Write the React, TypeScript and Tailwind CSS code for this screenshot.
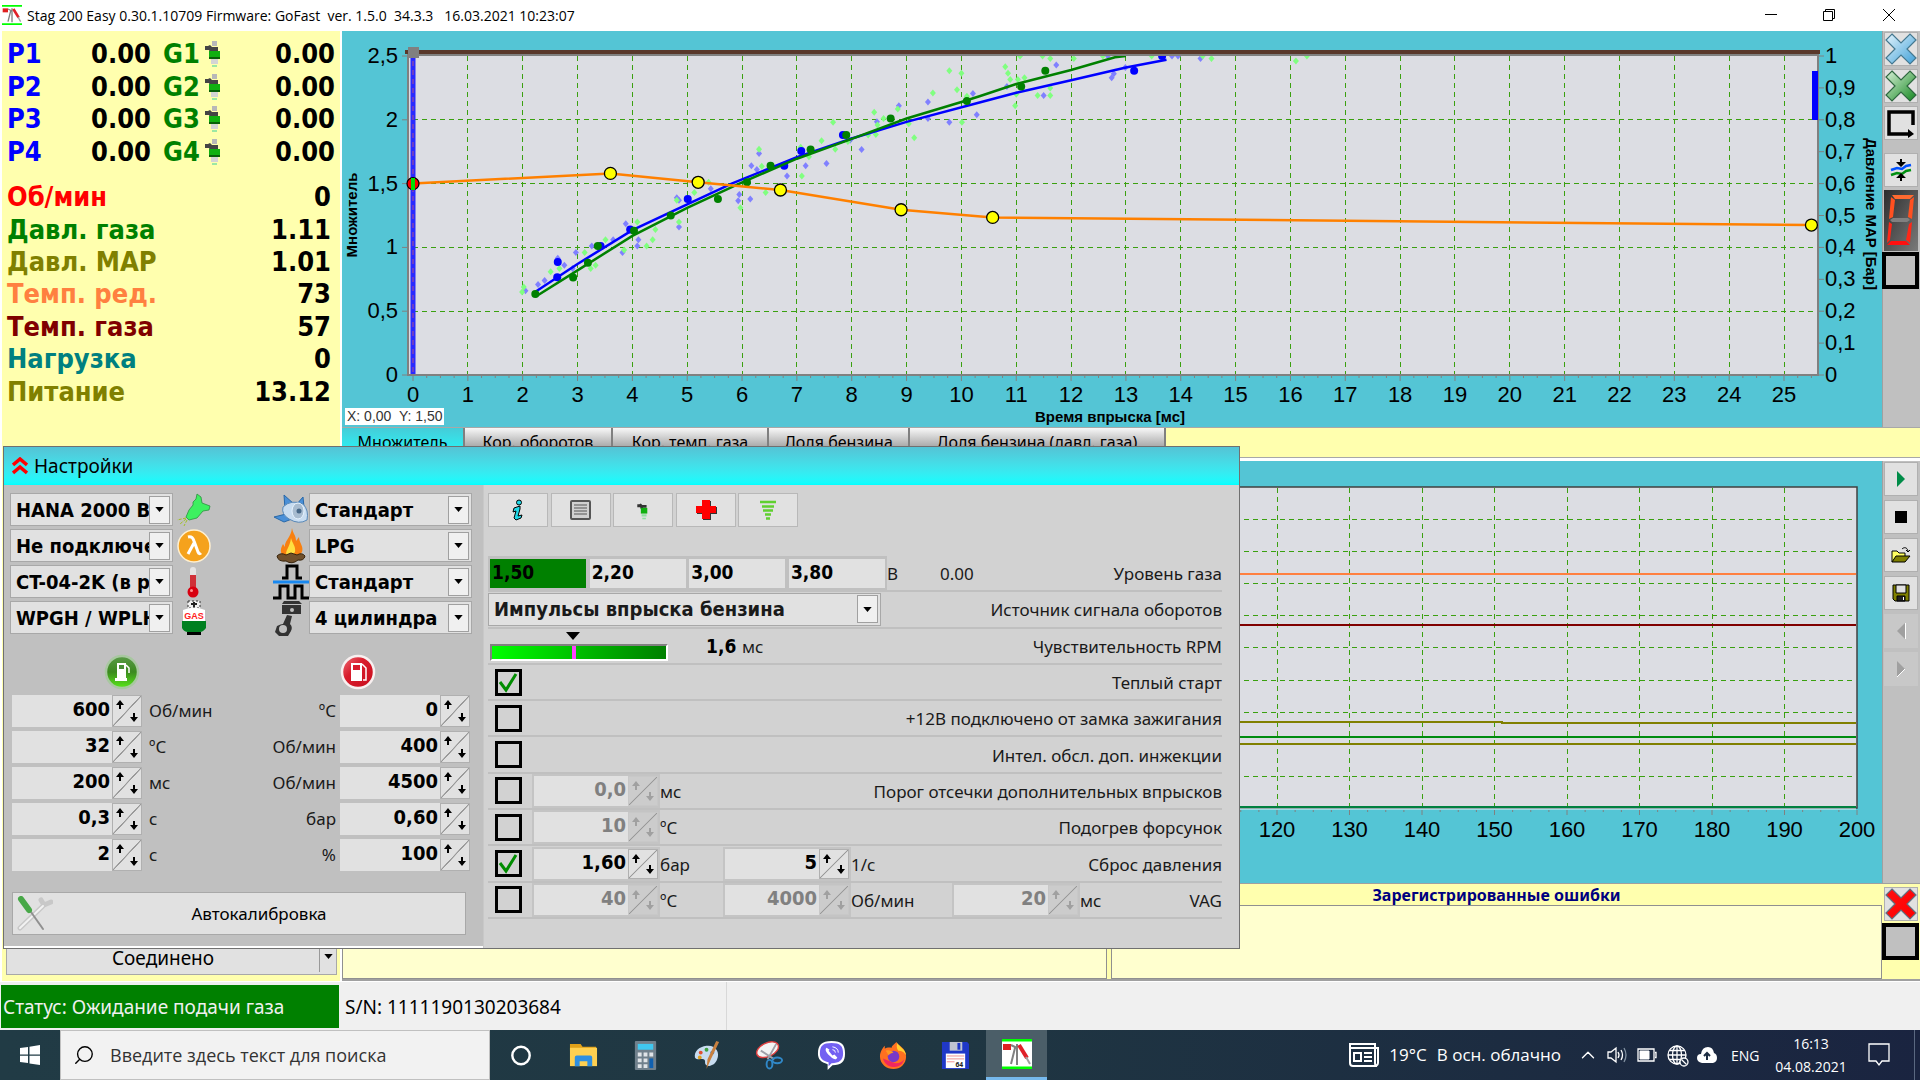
import React, { ReactNode } from 'react';
import { ChevronUp, Search } from 'lucide-react';

type Point = [number, number];

const BOLD = "font-['DejaVu_Sans_Condensed','DejaVu_Sans',sans-serif] font-bold";

const injectors = [1, 2, 3, 4];

const readings = [
  { label: 'Об/мин', value: '0', color: 'text-[#ff0000]' },
  { label: 'Давл. газа', value: '1.11', color: 'text-[#008000]' },
  { label: 'Давл. MAP', value: '1.01', color: 'text-[#808000]' },
  { label: 'Темп. ред.', value: '73', color: 'text-[#ff8040]' },
  { label: 'Темп. газа', value: '57', color: 'text-[#800000]' },
  { label: 'Нагрузка', value: '0', color: 'text-[#008080]' },
  { label: 'Питание', value: '13.12', color: 'text-[#808000]' },
];

const tabs = [
  { label: 'Множитель', width: 'w-[123px]' },
  { label: 'Кор. оборотов', width: 'w-[148px]' },
  { label: 'Кор. темп. газа', width: 'w-[156px]' },
  { label: 'Доля бензина', width: 'w-[141px]' },
  { label: 'Доля бензина (давл. газа)', width: 'w-[256px]' },
];

// chart points are [injection time in ms, multiplier]
const orangeLine: Point[] = [[0, 1.5], [3.6, 1.58], [5.2, 1.51], [6.7, 1.45], [8.9, 1.295], [10.57, 1.235], [25.5, 1.175]];

const blueCurve: Point[] = [
  [2.24, 0.655], [3, 0.87], [4, 1.135], [5, 1.338], [5.81, 1.5], [7, 1.707], [8, 1.853],
  [9, 1.984], [10.33, 2.136], [11, 2.212], [12, 2.31], [13, 2.41], [13.74, 2.47],
];

const greenCurve: Point[] = [
  [2.24, 0.615], [3, 0.82], [4, 1.09], [5, 1.31], [5.9, 1.49], [7, 1.695], [8, 1.85],
  [9, 2.01], [10, 2.14], [10.33, 2.185], [11, 2.28], [12, 2.39], [12.8, 2.49], [13, 2.5],
];

const blueDots: Point[] = [
  [2.64, 0.885], [2.63, 0.767], [3.96, 1.14], [3.42, 1.01], [5.01, 1.38], [6.77, 1.64],
  [7.08, 1.755], [7.84, 1.88], [13.15, 2.385], [13.66, 2.5],
];

const greenDots: Point[] = [
  [2.23, 0.634], [2.92, 0.764], [3.19, 0.88], [3.37, 1.01], [4.03, 1.13], [4.7, 1.25], [5.56, 1.38], [6.09, 1.51],
  [6.52, 1.64], [7.25, 1.767], [7.9, 1.88], [8.71, 2.01], [10.1, 2.147], [11.09, 2.26], [11.53, 2.385],
];

const lightGreen: Point[] = [
  [1.99, 0.65], [2.02, 0.69], [2.51, 0.81], [2.67, 0.835], [3.13, 0.96], [3.51, 1.06], [3.24, 0.835], [3.33, 0.86],
  [3.85, 0.98], [4.09, 1.2], [4.26, 1.01], [4.37, 1.06], [4.42, 1.14], [4.85, 1.2], [4.81, 1.37], [5.13, 1.43],
  [5.39, 1.51], [5.97, 1.31], [6.43, 1.43], [6.36, 1.635], [6.31, 1.77], [7.09, 1.56], [7.22, 1.71], [7.07, 1.785],
  [7.45, 1.835], [7.7, 1.77], [7.66, 1.98], [7.93, 1.83], [8.3, 1.88], [8.44, 1.885], [8.47, 1.96], [8.41, 2.06],
  [8.58, 2.01], [8.84, 2.085], [9.04, 1.97], [9.14, 1.86], [9.48, 2.21], [9.78, 2.385], [9.92, 2.235], [10, 2.365],
  [10.01, 1.98], [10.1, 2.185], [10.8, 2.415], [10.85, 2.365], [10.89, 2.315], [11.03, 2.315], [11.15, 2.33],
  [10.98, 2.11], [11, 2.2], [11.39, 2.19], [11.62, 2.19], [11.62, 2.25], [11.62, 2.48], [12.05, 2.48], [14.56, 2.48],
  [16.1, 2.46], [11.07, 2.5], [11.48, 2.5], [12.58, 2.5], [13.47, 2.5], [14.4, 2.5], [16.3, 2.5],
];

const lightBlue: Point[] = [
  [2.05, 0.66], [2.28, 0.71], [2.4, 0.74], [2.76, 0.86], [2.91, 0.835], [2.97, 0.96], [2.64, 0.915], [3.26, 1.01],
  [3.65, 1.06], [3.82, 0.96], [4.09, 1.01], [4.11, 1.06], [3.88, 1.185], [4.85, 1.16], [4.81, 1.39], [4.85, 1.37],
  [5.43, 1.46], [5.93, 1.365], [5.95, 1.415], [6.15, 1.38], [6.17, 1.64], [6.27, 1.61], [6.31, 1.735], [6.82, 1.56],
  [7.16, 1.64], [7.54, 1.657], [7.97, 1.84], [8.18, 1.767], [8.46, 1.985], [8.86, 2.11], [9.39, 2.14], [9.39, 2.01],
  [9.78, 1.98], [10.21, 2.207], [10.28, 2.04], [10.83, 2.26], [11.5, 2.19], [11.73, 2.43], [12.74, 2.33],
  [12.78, 2.36], [12.99, 2.41], [14.36, 2.48], [12.67, 2.5], [13.84, 2.5], [13.95, 2.5],
];

const sx = (ms: number) => 71 + ms * 54.84;
const sy = (mult: number) => 344 - mult * 127.6;
const toPath = (points: Point[]) => points.map(([x, y]) => `${sx(x)},${sy(y)}`).join(' ');
const range = (n: number) => Array.from({ length: n }, (_, i) => i);

const Diamonds = ({ points, color }: { points: Point[]; color: string }) => (
  <g fill={color}>
    {points.map(([x, y], i) => (
      <path key={i} d={`M${sx(x)} ${sy(y) - 3.5}l3 3.5l-3 3.5l-3-3.5z`} />
    ))}
  </g>
);

const MultiplierChart = () => (
  <svg
    viewBox="0 0 1540 396"
    preserveAspectRatio="none"
    className="block h-[396px] w-full bg-[#54c5d5] font-['Liberation_Sans',Arial,sans-serif]"
    role="img"
    aria-label="Множитель"
  >
    <clipPath id="plot">
      <rect x="66" y="25" width="1410" height="319" />
    </clipPath>
    <rect x="66" y="24" width="1410" height="320" fill="#dcdde3" stroke="#808080" strokeWidth="2" />
    <g stroke="#3aa010" strokeWidth="1" strokeDasharray="5 4" shapeRendering="crispEdges">
      {range(25).map((i) => (
        <line key={i} x1={sx(i + 1)} x2={sx(i + 1)} y1="25" y2="343" />
      ))}
      {[0.5, 1, 1.5, 2].map((v) => (
        <line key={v} x1="71" x2="1475" y1={sy(v)} y2={sy(v)} />
      ))}
    </g>
    <g stroke="#808080">
      {range(103).map((i) => (
        <line key={i} x1={sx(i / 4)} x2={sx(i / 4)} y1="344" y2={i % 4 ? 347 : 350} />
      ))}
      {range(6).map((i) => (
        <line key={i} x1="60" x2="66" y1={sy(i / 2)} y2={sy(i / 2)} />
      ))}
      {range(11).map((i) => (
        <line key={i} x1="1476" x2="1482" y1={sy(i / 4)} y2={sy(i / 4)} />
      ))}
    </g>
    <g fontSize="22" fill="#000">
      {range(26).map((i) => (
        <text key={i} x={sx(i)} y="371" textAnchor="middle">{i}</text>
      ))}
      {['0', '0,5', '1', '1,5', '2', '2,5'].map((t, i) => (
        <text key={t} x="56" y={sy(i / 2) + 7} textAnchor="end">{t}</text>
      ))}
      {['0', '0,1', '0,2', '0,3', '0,4', '0,5', '0,6', '0,7', '0,8', '0,9', '1'].map((t, i) => (
        <text key={t} x="1483" y={sy(i / 4) + 7}>{t}</text>
      ))}
    </g>
    <g fontSize="15" fontWeight="bold" textAnchor="middle">
      <text transform="translate(15 184) rotate(-90)">Множитель</text>
      <text transform="translate(1524 183) rotate(90)">Давление MAP [Бар]</text>
      <text x="768" y="391">Время впрыска [мс]</text>
    </g>
    <line x1="63" x2="1478" y1="21" y2="21" stroke="#59382b" strokeWidth="4" />
    <line x1="71" x2="71" y1="21" y2="343" stroke="#2a2aff" strokeWidth="5" />
    <line x1="71" x2="71" y1="21" y2="343" stroke="#b0508c" strokeDasharray="5 4" />
    <rect x="66" y="16" width="11" height="11" fill="#808080" />
    <g clipPath="url(#plot)">
      <Diamonds points={lightBlue} color="#8080ff" />
      <Diamonds points={lightGreen} color="#80ff80" />
      {blueDots.map(([x, y], i) => (
        <circle key={i} cx={sx(x)} cy={sy(y)} r="4" fill="#0000ff" />
      ))}
      <polyline points={toPath(blueCurve)} fill="none" stroke="#0000ff" strokeWidth="2.5" />
      {greenDots.map(([x, y], i) => (
        <circle key={i} cx={sx(x)} cy={sy(y)} r="4" fill="#008000" />
      ))}
      <polyline points={toPath(greenCurve)} fill="none" stroke="#008000" strokeWidth="2.5" />
      <polyline points={toPath(orangeLine)} fill="none" stroke="#ff8000" strokeWidth="2.5" />
    </g>
    <rect x="1470" y="40" width="6" height="49" fill="#0000ff" />
    {orangeLine.map(([x, y], i) => (
      <circle key={i} cx={sx(x)} cy={sy(y)} r="6" fill={i ? '#ffff00' : '#ff0000'} stroke="#000" strokeWidth="1.3" />
    ))}
    <rect x="69" y="147" width="4" height="12" fill="#00e000" />
  </svg>
);

const ox = (v: number) => 65 + v * 7.25;

const Oscilloscope = () => (
  <svg
    viewBox="0 0 1540 422"
    preserveAspectRatio="none"
    className="block h-[422px] w-full bg-[#54c5d5] font-['Liberation_Sans',Arial,sans-serif]"
    role="img"
    aria-label="Осциллограф"
  >
    <rect x="65" y="26" width="1450" height="321" fill="#dcdde3" stroke="#404040" strokeWidth="1.5" />
    <g stroke="#3aa010" strokeDasharray="5 4" shapeRendering="crispEdges">
      {range(19).map((i) => (
        <line key={i} x1={ox((i + 1) * 10)} x2={ox((i + 1) * 10)} y1="27" y2="346" />
      ))}
      {range(9).map((i) => (
        <line key={i} x1="65" x2="1514" y1={58 + i * 32.2} y2={58 + i * 32.2} />
      ))}
    </g>
    <g fill="none" strokeWidth="2">
      <path d="M65 113H1514" stroke="#ff8040" />
      <path d="M65 164H1514" stroke="#800000" />
      <path d="M65 261H1160V262H1514" stroke="#808000" />
      <path d="M65 276H1514" stroke="#008c10" />
      <path d="M65 283H1514" stroke="#808000" />
      <path d="M65 346H1514" stroke="#008040" />
      <path d="M65 348H1514" stroke="#e8f4f4" strokeWidth="1" />
    </g>
    <g stroke="#808080">
      {range(81).map((i) => (
        <line key={i} x1={ox(i * 2.5)} x2={ox(i * 2.5)} y1="349" y2={i % 4 ? 351 : 354} />
      ))}
    </g>
    <g fontSize="22" textAnchor="middle">
      {[120, 130, 140, 150, 160, 170, 180, 190, 200].map((v) => (
        <text key={v} x={ox(v)} y="376">{v}</text>
      ))}
    </g>
  </svg>
);

const InjectorIcon = () => (
  <svg viewBox="0 0 16 28" className="h-7 w-4">
    <rect x="7" y="1" width="5" height="5" fill="#b8b8b8" />
    <path d="M0 6h3l2-1 2 2h6v4H7l-1 2H5L4 10H0z" fill="#444" />
    <rect x="4" y="11" width="11" height="8" fill="#10b010" />
    <rect x="4" y="17" width="11" height="2" fill="#086008" />
    <path d="M6 19h7v5H6z" fill="#d4d4d4" />
    <path d="M7 25h5v2H7z" fill="#9ce8a4" />
  </svg>
);

const Telemetry = () => (
  <section className="flex w-[342px] shrink-0 flex-col bg-white pl-[2px] pr-[2px]">
    <div className="flex flex-1 flex-col bg-[#ffffae]">
      <div className={`${BOLD} mt-[7px] grid h-[130px] grid-rows-4 items-center pl-[5px] pr-[5px] text-[27px] leading-8`}>
        {injectors.map((n) => (
          <div key={n} className="flex items-center">
            <span className="w-14 text-[#0000ff]">P{n}</span>
            <span className="w-[88px] text-right">0.00</span>
            <span className="w-[54px] pl-3 text-[#008000]">G{n}</span>
            <InjectorIcon />
            <span className="flex-1 text-right">0.00</span>
          </div>
        ))}
      </div>
      <div className={`${BOLD} mt-[13px] grid h-[227px] grid-rows-7 items-center pl-[5px] pr-[9px] text-[27px] leading-8`}>
        {readings.map((r) => (
          <div key={r.label} className="flex justify-between">
            <span className={r.color}>{r.label}</span>
            <span>{r.value}</span>
          </div>
        ))}
      </div>
      <button className="mt-auto mb-1.5 ml-1 mr-[3px] flex h-[34px] items-center border border-[#a8a8a8] bg-[#e1e1e1] text-[19px]">
        <span className="flex-1 text-center">Соединено</span>
        <span className="flex h-7 w-[17px] items-center justify-center border-l border-[#999] pb-1">
          <DownArrow />
        </span>
      </button>
    </div>
  </section>
);

const DownArrow = () => (
  <svg viewBox="0 0 10 6" className="h-[5px] w-[9px] shrink-0">
    <path d="M0 0h10L5 6z" fill="#000" />
  </svg>
);

const ToolButton = ({ label, children, disabled }: { label: string; children: ReactNode; disabled?: boolean }) => (
  <button
    aria-label={label}
    disabled={disabled}
    className="flex h-[34px] w-[34px] shrink-0 items-center justify-center border border-[#b0b0b0] bg-[#e1e1e1] disabled:border-[#c8c8c8] disabled:bg-[#c8c8c8]"
  >
    {children}
  </button>
);

const BigCross = ({ id, from, to, stroke }: { id: string; from: string; to: string; stroke: string }) => (
  <svg viewBox="0 0 32 32" className="size-8 shrink-0">
    <linearGradient id={id} x1="0" y1="0" x2="1" y2="1">
      <stop offset="0" stopColor={from} />
      <stop offset="1" stopColor={to} />
    </linearGradient>
    <path d="M7 1l9 9 9-9 6 6-9 9 9 9-6 6-9-9-9 9-6-6 9-9-9-9z" fill={`url(#${id})`} stroke={stroke} strokeWidth="1.2" />
  </svg>
);

const ThickCheck = ({ label }: { label: string }) => (
  <input
    type="checkbox"
    aria-label={label}
    className="h-[37px] w-[37px] shrink-0 appearance-none border-4 border-black bg-[#c0c0c0]"
  />
);

const ChartTools = () => (
  <aside className="flex w-[38px] shrink-0 flex-col items-center border-l border-[#a0a0a0] bg-[#c0c0c0] pt-px pr-[2px]">
    <div className="flex flex-col gap-[3px]">
      <ToolButton label="Очистить бензин">
        <BigCross id="xb" from="#e4f4fc" to="#3fa0d8" stroke="#447890" />
      </ToolButton>
      <ToolButton label="Очистить газ">
        <BigCross id="xg" from="#d8f0d8" to="#148820" stroke="#2f6840" />
      </ToolButton>
      <ToolButton label="Обход">
        <svg viewBox="0 0 30 30" className="size-[30px]" fill="none" stroke="#000" strokeWidth="3.5">
          <path d="M27 17V4H3v22h20" />
          <path d="M22 21l6 5-6 4z" fill="#000" stroke="none" />
        </svg>
      </ToolButton>
    </div>
    <div className="mt-[13px] flex flex-col gap-[3px]">
      <ToolButton label="Совместить">
        <svg viewBox="0 0 24 24" className="size-6" fill="none">
          <path d="M2 12l6-2 5 1 4-3 5-1" stroke="#0050ff" strokeWidth="2.5" />
          <path d="M2 17l6-2 5 1 4-3 5-1" stroke="#009010" strokeWidth="2.5" />
          <path d="M12 1v7M12 23v-7" stroke="#000" strokeWidth="2" />
          <path d="M7 4h10l-5 5zM7 20h10l-5-5z" fill="#000" />
        </svg>
      </ToolButton>
      <svg viewBox="0 0 34 61" className="h-[61px] w-[34px]">
        <linearGradient id="led" x1="0" y1="0" x2="1" y2="1">
          <stop offset="0" stopColor="#2c2c2c" />
          <stop offset="1" stopColor="#7a7a7a" />
        </linearGradient>
        <rect width="34" height="61" fill="url(#led)" />
        <path d="M8 5h22l-4 4H11z" fill="#ff6a30" />
        <path d="M7 7l4 3-2 17-4 2zM30 7l-4 3-2 17 4 2z" fill="#ff5020" />
        <path d="M6 30l3-2h15l2 2-3 2H8z" fill="#808080" />
        <path d="M5 32l3 2-2 16-3 3zM28 32l-3 2-3 16 4 3z" fill="#ff2818" />
        <path d="M3 55l4-4h15l4 4z" fill="#ff1010" />
      </svg>
    </div>
    <div className="mt-px w-[37px]">
      <ThickCheck label="Индикация" />
    </div>
  </aside>
);

const LogTools = () => (
  <aside className="flex w-[38px] shrink-0 flex-col items-center gap-1 border-l border-[#a0a0a0] bg-[#c0c0c0] pt-px pr-[2px]">
    <ToolButton label="Старт">
      <svg viewBox="0 0 10 16" className="h-4 w-2.5"><path d="M1 0l8 8-8 8z" fill="#008c48" /></svg>
    </ToolButton>
    <ToolButton label="Стоп">
      <svg viewBox="0 0 12 12" className="size-3"><path d="M0 0h12v12H0z" /></svg>
    </ToolButton>
    <ToolButton label="Открыть">
      <svg viewBox="0 0 20 18" className="h-[18px] w-5" stroke="#000">
        <path d="M1 16V5h5l2 2h6v3" fill="#ffff60" />
        <path d="M1 16l4-6h14l-5 6z" fill="#808000" />
        <path d="M11 3c2-2 5-2 6 2m-2-1l2 2 2-2" fill="none" />
      </svg>
    </ToolButton>
    <ToolButton label="Сохранить">
      <svg viewBox="0 0 18 18" className="size-[18px]" stroke="#000">
        <path d="M1 1h16v16H3l-2-2z" fill="#808000" />
        <path d="M4 1h10v8H4z" fill="#e1e1e1" />
        <path d="M5 12h8v5H5z" fill="#222" />
        <path d="M11 13h1v3h-1z" fill="#fff" stroke="none" />
      </svg>
    </ToolButton>
    <ToolButton label="Назад" disabled>
      <svg viewBox="0 0 10 16" className="h-4 w-2.5"><path d="M9 0L1 8l8 8z" fill="#a0a0a0" /><path d="M9.500 0v16" stroke="#fff" /></svg>
    </ToolButton>
    <ToolButton label="Вперёд" disabled>
      <svg viewBox="0 0 10 16" className="h-4 w-2.5"><path d="M1 0l8 8-8 8z" fill="#a0a0a0" /><path d="M9 8l-8 8" stroke="#fff" /></svg>
    </ToolButton>
  </aside>
);

const Combo = ({ label, value, className }: { label: string; value: string; className: string }) => (
  <div className={`flex h-[33px] shrink-0 items-center border border-[#a8a8a8] bg-[#e1e1e1] pr-0.5 ${className}`}>
    <select aria-label={label} className={`${BOLD} h-full min-w-0 flex-1 appearance-none overflow-hidden pl-[5px] text-[20px]`}>
      <option>{value}</option>
    </select>
    <span className="flex h-[28px] w-[21px] items-center justify-center border border-[#a0a0a0] bg-[#f0f0f0]">
      <DownArrow />
    </span>
  </div>
);

const Arrow = ({ down }: { down?: boolean }) => (
  <svg viewBox="0 0 8 9" className="h-[9px] w-2">
    <path d={down ? 'M3 0h2v4h3L4 9 0 4h3z' : 'M3 9h2V5h3L4 0 0 5h3z'} fill="currentColor" />
  </svg>
);

interface SpinnerProps {
  label: string;
  value: string;
  className: string;
  disabled?: boolean;
}

const Spinner = ({ label, value, className, disabled }: SpinnerProps) => (
  <div className={`flex shrink-0 ${className} ${disabled ? 'text-[#808080]' : 'text-black'}`}>
    <input
      aria-label={label}
      defaultValue={value}
      disabled={disabled}
      className={`${BOLD} min-w-0 flex-1 bg-[#e1e1e1] pr-0.5 pb-1 text-right text-[20px]`}
    />
    <div
      className={`grid w-[30px] grid-cols-2 border bg-[linear-gradient(to_bottom_right,transparent_48%,#999_49%,#999_51%,transparent_52%)] ${
        disabled ? 'border-[#c8c8c8] bg-[#cccccc] text-[#a0a0a0]' : 'border-[#b0b0b0] bg-[#e1e1e1]'
      }`}
    >
      <button aria-label={`${label} +`} disabled={disabled} className="flex items-start justify-center pt-1">
        <Arrow />
      </button>
      <button aria-label={`${label} -`} disabled={disabled} className="flex items-end justify-center pb-1">
        <Arrow down />
      </button>
    </div>
  </div>
);

const GasInjector = () => (
  <svg viewBox="0 0 34 34" className="size-[34px]">
    <path d="M20 1l4 3 1 6 8 3-1 4-6 1-6 7-8 2-3-3 3-7 4-5 0-3 3-3z" fill="#3df060" stroke="#2d9040" strokeWidth=".8" />
    <path d="M9 25l-9 2M9 26l-6 5M10 27l-3 6" stroke="#a0c020" strokeDasharray="3 1.5" />
  </svg>
);

const Lambda = () => (
  <svg viewBox="0 0 34 34" className="size-[34px]">
    <circle cx="17" cy="17" r="16" fill="#f5a21c" stroke="#fff0d0" strokeWidth="1.5" />
    <path d="M11 8c4-1 5 1 6 4l4 11c1 2 2 2 3 1M17 14l-6 11" fill="none" stroke="#fff" strokeWidth="3" />
  </svg>
);

const Thermometer = () => (
  <svg viewBox="0 0 34 34" className="size-[34px]">
    <rect x="13" y="2" width="6" height="24" rx="3" fill="#e4e4e4" />
    <rect x="13" y="10" width="6" height="16" fill="#d03038" />
    <circle cx="16" cy="27" r="5.5" fill="#d80010" />
    <circle cx="14.5" cy="25.5" r="1.5" fill="#ff9090" />
  </svg>
);

const GasTank = () => (
  <svg viewBox="0 0 34 36" className="h-9 w-[34px]">
    <path d="M11 1h12v7H11z" fill="#f0f0f0" stroke="#333" strokeDasharray="2 2" />
    <path d="M14 4h6M17 2v7" stroke="#222" strokeWidth="2" />
    <path d="M6 10q11-5 22 0v12H6z" fill="#fff" />
    <path d="M5 21h24v7q-3 4-6 4H11q-4 0-6-4z" fill="#008020" />
    <path d="M10 32h14v3H10z" />
    <text x="17" y="19" fontSize="9" fontWeight="bold" fill="#ff2020" textAnchor="middle" className="font-['Liberation_Sans',sans-serif]">GAS</text>
  </svg>
);

const Turbo = () => (
  <svg viewBox="0 0 36 34" className="h-[34px] w-9">
    <path d="M11 2l10 9-9 5zM30 4l1 10-8-2zM1 24l12-3 6 5-8 3z" fill="#4a90d8" stroke="#2868a8" />
    <path d="M10 14q8-8 20-3 6 6 4 16-8 5-18-1-8-5-6-12z" fill="#c8dcf0" stroke="#5888b8" />
    <ellipse cx="25" cy="18" rx="6" ry="8" fill="#a8bcd0" stroke="#e8f4ff" />
    <circle cx="26" cy="18" r="2.5" fill="#486888" />
  </svg>
);

const Fire = () => (
  <svg viewBox="0 0 36 36" className="h-9 w-9">
    <path d="M19 0c1 6 4 7 4 13l3-4c0 6 5 9 3 15l-4 5H11c-5-5-3-9-1-13l2 3c-1-6 6-9 7-19z" fill="#f88010" />
    <path d="M18 10c1 5 5 8 4 14l-3 4h-5c-3-5 3-8 4-18z" fill="#ffe040" />
    <path d="M4 28q4-4 9-1l5-2 6 2q5-3 8 1-1 5-7 4-6 5-12 1-8 1-9-5z" fill="#70502c" stroke="#38240c" />
  </svg>
);

const Pulses = () => (
  <svg viewBox="0 0 36 36" className="h-9 w-9" fill="none" stroke="#000" strokeWidth="3">
    <path d="M9 14h5V2h10v12h5" />
    <path d="M0 34h7V22h8v12h7V22h7v12h7" />
    <path d="M0 18h36" stroke="#1888f0" />
  </svg>
);

const Piston = () => (
  <svg viewBox="0 0 36 36" className="h-9 w-9" fill="#333">
    <path d="M11 1h15l3 3H9zM9 5h19v9H9z" />
    <circle cx="19" cy="10" r="2" fill="#c0c0c0" />
    <path d="M14 15l5 1-2 8q3 3 1 7l-3 5H6l-4-4 2-6q4-2 6-2z" />
    <circle cx="10" cy="29" r="4" fill="#c0c0c0" />
  </svg>
);

const GasBadge = () => (
  <svg viewBox="0 0 36 36" className="size-9">
    <linearGradient id="gasBadge" x1="0" y1="0" x2="0" y2="1">
      <stop offset="0" stopColor="#5a9a48" />
      <stop offset=".5" stopColor="#3c8a20" />
      <stop offset="1" stopColor="#58e818" />
    </linearGradient>
    <circle cx="18" cy="18" r="16" fill="url(#gasBadge)" stroke="#a8c8a0" strokeWidth="2.5" />
    <path d="M13 9h9v15h1v3H11v-3h2z" fill="#fff" />
    <path d="M15 11h5v4h-5z" fill="#4a9038" />
    <path d="M22 11l3 3v5" fill="none" stroke="#fff" strokeWidth="1.5" />
  </svg>
);

const PetrolBadge = () => (
  <svg viewBox="0 0 36 36" className="size-9">
    <linearGradient id="petrolBadge" x1="0" y1="0" x2="1" y2="1">
      <stop offset="0" stopColor="#f07078" />
      <stop offset=".4" stopColor="#d81c2c" />
      <stop offset="1" stopColor="#c80c1c" />
    </linearGradient>
    <circle cx="18" cy="18" r="16" fill="url(#petrolBadge)" stroke="#f8f0f0" strokeWidth="2.5" />
    <path d="M11 9h11v18H11z" fill="#fff" />
    <path d="M13 11h7v5h-7z" fill="#d81c2c" />
    <path d="M22 10l4 4v12h-3" fill="none" stroke="#fff" strokeWidth="1.5" />
  </svg>
);

const combos = [
  { left: 'HANA 2000 Blue', leftLabel: 'Форсунки', leftIcon: <GasInjector />, right: 'Стандарт', rightLabel: 'Турбо', rightIcon: <Turbo /> },
  { left: 'Не подключен', leftLabel: 'Лямбда', leftIcon: <Lambda />, right: 'LPG', rightLabel: 'Тип газа', rightIcon: <Fire /> },
  { left: 'CT-04-2K (в редукторе)', leftLabel: 'Датчик температуры', leftIcon: <Thermometer />, right: 'Стандарт', rightLabel: 'Зажигание', rightIcon: <Pulses /> },
  { left: 'WPGH / WPLH', leftLabel: 'Датчик уровня', leftIcon: <GasTank />, right: '4 цилиндра', rightLabel: 'Цилиндры', rightIcon: <Piston /> },
];

const thresholds = [
  { left: '600', leftUnit: 'Об/мин', rightUnit: 'ºC', right: '0' },
  { left: '32', leftUnit: 'ºC', rightUnit: 'Об/мин', right: '400' },
  { left: '200', leftUnit: 'мс', rightUnit: 'Об/мин', right: '4500' },
  { left: '0,3', leftUnit: 'с', rightUnit: 'бар', right: '0,60' },
  { left: '2', leftUnit: 'с', rightUnit: '%', right: '100' },
];

const Row = ({ label, id, children }: { label: string; id?: string; children?: ReactNode }) => (
  <div className="flex items-center border-b-2 border-[#c0c0c0]">
    {children}
    <label htmlFor={id} className="ml-auto whitespace-nowrap pt-0.5">{label}</label>
  </div>
);

const Check = ({ id, checked }: { id: string; checked?: boolean }) => (
  <span className="relative ml-[7px] mr-2.5 size-[27px] shrink-0">
    <input id={id} type="checkbox" defaultChecked={checked} className="peer block size-full appearance-none border-[3px] border-black bg-[#d2d2d2]" />
    <svg viewBox="0 0 27 27" className="pointer-events-none absolute inset-0 hidden peer-checked:block">
      <path d="M5 13l6 8L21 5" fill="none" stroke="#008c00" strokeWidth="3" />
    </svg>
  </span>
);

const Field = ({ label, value, unit, disabled, wide }: { label: string; value: string; unit: string; disabled?: boolean; wide?: string }) => (
  <>
    <div className="flex h-[34px] shrink-0 items-center border-2 border-[#c4c4c4] bg-[#c4c4c4]">
      <Spinner label={label} value={value} disabled={disabled} className="h-[30px] w-[124px]" />
    </div>
    <span className={`pt-0.5 ${wide ?? ''}`}>{unit}</span>
  </>
);

const SettingsDialog = () => (
  <div
    role="dialog"
    aria-label="Настройки"
    className="absolute left-[3px] top-[415px] flex h-[503px] w-[1237px] flex-col border border-[#707070] bg-[#c0c0c0] text-[17px] leading-6 text-[#1a1a1a]"
  >
    <header className="flex h-[38px] shrink-0 items-center bg-linear-to-b from-[#54c3d5] to-[#00ffff] pl-2 text-[19px] text-black">
      <svg viewBox="0 0 16 18" className="mr-1.5 h-[18px] w-4" fill="none" stroke="#ff0000" strokeWidth="3.5">
        <path d="M1 8l7-6 7 6M1 16l7-6 7 6" />
      </svg>
      <h2>Настройки</h2>
    </header>
    <div className="flex flex-1">
      <section className="w-[479px] shrink-0 border-b-2 border-white pl-1.5 pt-2">
        <div className="flex flex-col gap-[3px] pr-[11px] text-black">
          {combos.map((c) => (
            <div key={c.leftLabel} className="flex h-[33px] items-center">
              <Combo label={c.leftLabel} value={c.left} className="mr-1 w-[163px]" />
              {c.leftIcon}
              <span className="flex-1" />
              {c.rightIcon}
              <Combo label={c.rightLabel} value={c.right} className="w-[163px]" />
            </div>
          ))}
        </div>
        <div className="mt-5 flex justify-between pl-[94px] pr-[107px]">
          <GasBadge />
          <PetrolBadge />
        </div>
        <div className="mt-[5px] flex flex-col gap-1 pl-0.5 pr-[13px]">
          {thresholds.map((t, i) => (
            <div key={i} className="flex h-8 items-center">
              <Spinner label={`Порог ${i + 1}`} value={t.left} className="h-8 w-[130px]" />
              <span className="ml-[7px]">{t.leftUnit}</span>
              <span className="ml-auto mr-1">{t.rightUnit}</span>
              <Spinner label={`Порог возврата ${i + 1}`} value={t.right} className="h-8 w-[130px]" />
            </div>
          ))}
        </div>
        <button className="ml-0.5 mt-[21px] flex h-[43px] w-[454px] items-center border border-[#a8a8a8] bg-[#e1e1e1] pl-1 text-black">
          <svg viewBox="0 0 36 36" className="size-9" strokeLinecap="round">
            <path d="M3 32L27 9M27 9l-3-5M27 9l7-3" stroke="#c8c8c8" strokeWidth="5" />
            <path d="M3 32L26 10" stroke="#f2f2f2" strokeWidth="2" />
            <path d="M14 16l12 17" stroke="#909090" strokeWidth="2" />
            <path d="M4 3l8 11" stroke="#48a848" strokeWidth="6" />
          </svg>
          <span className="flex-1 text-center">Автокалибровка</span>
        </button>
      </section>
      <section className="flex-1 border-l border-[#c8c8c8] bg-[#d2d2d2] pl-1 pr-[17px] pt-2">
        <div className="flex w-[310px] justify-between">
          {settingsTools.map((t) => (
            <button key={t.label} aria-label={t.label} className="flex h-[34px] w-[60px] items-center justify-center border border-[#b8b8b8] bg-[#e1e1e1]">
              {t.icon}
            </button>
          ))}
        </div>
        <div className="mt-[29px] grid h-[363px] grid-rows-10">
          <Row label="Уровень газа">
            <div className={`${BOLD} flex h-[34px] w-[399px] items-center justify-between border-x-2 border-[#c0c0c0] bg-[#c0c0c0] text-[19px] text-black`}>
              {['1,50', '2,20', '3,00', '3,80'].map((v, i) => (
                <input
                  key={v}
                  aria-label={`Уровень ${i + 1}`}
                  defaultValue={v}
                  className={`h-[29px] w-24 pb-0.5 pl-0.5 ${i ? 'bg-[#e1e1e1]' : 'bg-[#008000]'}`}
                />
              ))}
            </div>
            <span className="w-[53px] pt-0.5">В</span>
            <span className="pt-0.5">0.00</span>
          </Row>
          <Row label="Источник сигнала оборотов">
            <Combo label="Источник сигнала" value="Импульсы впрыска бензина" className="w-[393px]" />
          </Row>
          <Row label="Чувствительность RPM">
            <div className="ml-0.5 w-[178px]">
              <svg viewBox="0 0 178 10" className="block h-2.5 w-full"><path d="M76 1h14l-7 8z" /></svg>
              <input
                type="range"
                aria-label="Чувствительность"
                defaultValue={47}
                className="mt-[3px] block h-[17px] w-full appearance-none border-2 border-[#808080] border-b-white border-r-white bg-linear-to-r from-[#00ff00] to-[#008000] [&::-webkit-slider-thumb]:h-[13px] [&::-webkit-slider-thumb]:w-[4px] [&::-webkit-slider-thumb]:appearance-none [&::-webkit-slider-thumb]:bg-[#ff40ff]"
              />
            </div>
            <span className={`${BOLD} ml-[38px] w-9 text-[19px] text-black`}>1,6</span>
            <span className="pt-0.5">мс</span>
          </Row>
          <Row label="Теплый старт" id="warm"><Check id="warm" checked /></Row>
          <Row label="+12В подключено от замка зажигания" id="ign"><Check id="ign" /></Row>
          <Row label="Интел. обсл. доп. инжекции" id="inj"><Check id="inj" /></Row>
          <Row label="Порог отсечки дополнительных впрысков" id="cut">
            <Check id="cut" />
            <Field label="Порог отсечки" value="0,0" unit="мс" disabled />
          </Row>
          <Row label="Подогрев форсунок" id="heat">
            <Check id="heat" />
            <Field label="Температура подогрева" value="10" unit="ºC" disabled />
          </Row>
          <Row label="Сброс давления" id="press">
            <Check id="press" checked />
            <Field label="Давление" value="1,60" unit="бар" wide="w-[63px]" />
            <Field label="Скорость сброса" value="5" unit="1/с" />
          </Row>
          <Row label="VAG" id="vag">
            <Check id="vag" />
            <Field label="VAG температура" value="40" unit="ºC" wide="w-[63px]" disabled />
            <Field label="VAG обороты" value="4000" unit="Об/мин" wide="w-[101px]" disabled />
            <Field label="VAG время" value="20" unit="мс" disabled />
          </Row>
        </div>
      </section>
    </div>
  </div>
);

const settingsTools = [
  {
    label: 'Информация',
    icon: (
      <svg viewBox="0 0 12 22" className="h-[22px] w-3" fill="#20d8e8" stroke="#000">
        <circle cx="7" cy="3.5" r="2.5" />
        <path d="M2 9l6-2v3l-2 7 4-1-1 3-5 2-2-2 2-7-3 1z" />
      </svg>
    ),
  },
  {
    label: 'Отчёт',
    icon: (
      <svg viewBox="0 0 22 20" className="h-5 w-[22px]">
        <rect x="1" y="1" width="19" height="18" rx="1" fill="#d0d0d0" stroke="#555" strokeWidth="2" />
        <path d="M4 5h13M4 8h13M4 11h13M4 14h13" stroke="#555" />
      </svg>
    ),
  },
  {
    label: 'Форсунка',
    icon: (
      <svg viewBox="0 0 16 28" className="h-5 w-3">
        <path d="M0 6h3l2-1 2 2h6v4H8l-1 2H5L4 10H0z" fill="#333" />
        <rect x="5" y="11" width="9" height="8" fill="#10b010" />
        <path d="M6 20h7v3H6zM7 25h5v2H7z" fill="#8fe0a0" />
      </svg>
    ),
  },
  {
    label: 'Диагностика',
    icon: (
      <svg viewBox="0 0 22 22" className="size-[22px]">
        <path d="M8 2h8v6h6v7h-6v6H8v-6H2V8h6z" fill="#333" />
        <path d="M7 1h8v6h6v7h-6v6H7v-6H1V7h6z" fill="#ff0000" />
      </svg>
    ),
  },
  {
    label: 'Фильтр',
    icon: (
      <svg viewBox="0 0 18 20" className="h-5 w-[18px]" stroke="#60d030" strokeWidth="2.5">
        <path d="M1 2h16M3 6.500h12M4 10.500h10M6 14.500h6M7 18.500h4" />
      </svg>
    ),
  },
];

const StagLogo = ({ className }: { className: string }) => (
  <svg viewBox="0 0 30 30" className={className}>
    <rect width="30" height="30" fill="#fff" />
    <path d="M0 0h30v2.500H0zM0 27.500h30V30H0z" fill="#00ff00" />
    <path d="M1 5h8v6H1z" fill="#e02020" />
    <path d="M9 6l6 3M13 9l-4 16M15 5v21" stroke="#808080" strokeWidth="2" fill="none" />
    <path d="M17 6l8 13" stroke="#e02028" strokeWidth="4" />
    <path d="M24 18l4 7" stroke="#a0a0a0" strokeWidth="2" />
  </svg>
);

const TitleBar = () => (
  <header className="flex h-[31px] shrink-0 items-center bg-white pb-px">
    <StagLogo className="ml-0.5 mr-[5px] size-5" />
    <h1 className="whitespace-pre font-['Open_Sans','Noto_Sans',sans-serif] text-[14px]">
      {'Stag 200 Easy 0.30.1.10709 Firmware: GoFast  ver. 1.5.0  34.3.3   16.03.2021 10:23:07'}
    </h1>
    <div className="ml-auto flex pr-px">
      <button aria-label="Свернуть" className="flex h-7 w-[58px] items-center justify-center">
        <svg viewBox="0 0 12 12" className="size-3" stroke="#000"><path d="M0 5.500h12" /></svg>
      </button>
      <button aria-label="Восстановить" className="flex h-7 w-[58px] items-center justify-center">
        <svg viewBox="0 0 12 12" className="size-3" fill="none" stroke="#000"><path d="M.5 2.500h9v9h-9zM2.500 2.500v-2h9v9h-2" /></svg>
      </button>
      <button aria-label="Закрыть" className="flex h-7 w-[61px] items-center justify-center">
        <svg viewBox="0 0 12 12" className="size-3" stroke="#000"><path d="M0 0l12 12M12 0L0 12" /></svg>
      </button>
    </div>
  </header>
);

const taskIcons: { label: string; icon: ReactNode }[] = [
  { label: 'Кортана', icon: <circle cx="14.5" cy="15" r="9" fill="none" stroke="#fff" strokeWidth="2.5" /> },
  {
    label: 'Проводник',
    icon: (
      <>
        <path d="M1 3h11l2 3h14v4H1z" fill="#e0a018" />
        <path d="M1 7h28v19H1z" fill="#ffd050" />
        <path d="M6 26v-9q0-2 2-2h14q2 0 2 2v9h-5v-5h-8v5z" fill="#2f8fe0" />
      </>
    ),
  },
  {
    label: 'Калькулятор',
    icon: (
      <>
        <rect x="4" y="0" width="22" height="30" rx="1" fill="#70808c" />
        <rect x="7" y="3" width="16" height="6" fill="#40c8f0" />
        <path d="M7 12h4v4H7zM13 12h4v4h-4zM19 12h4v4h-4zM7 18h4v4H7zM13 18h4v4h-4zM7 24h4v4H7zM13 24h4v4h-4z" fill="#e0e4e8" />
        <path d="M19 18h4v10h-4z" fill="#1060b0" />
      </>
    ),
  },
  {
    label: 'Paint',
    icon: (
      <>
        <path d="M14 5c10-1 14 7 11 14-2 6-8 8-11 6-3-1 0-5-3-6s-7 1-9-2C1 11 6 6 14 5z" fill="#c8dcf0" />
        <circle cx="8" cy="12" r="2" fill="#e05030" />
        <circle cx="14" cy="9" r="2" fill="#40a040" />
        <circle cx="7" cy="17" r="2" fill="#e0a020" />
        <circle cx="20" cy="12" r="2" fill="#3070d0" />
        <path d="M27 1l-9 19-4 9 1-10L24 0z" fill="#c88040" />
      </>
    ),
  },
  {
    label: 'Ножницы',
    icon: (
      <>
        <ellipse cx="13" cy="9" rx="12" ry="7" fill="#f4f4f4" stroke="#e04040" strokeWidth="1.5" transform="rotate(-25 13 9)" />
        <path d="M6 10l14 9M22 3l-9 16" stroke="#a0a0a8" strokeWidth="2" />
        <ellipse cx="15" cy="24" rx="3" ry="4.5" fill="none" stroke="#3088c8" strokeWidth="2" />
        <ellipse cx="23" cy="20" rx="5" ry="3" fill="none" stroke="#3088c8" strokeWidth="2" />
      </>
    ),
  },
  {
    label: 'Viber',
    icon: (
      <>
        <path d="M15 0c11 0 14 4 14 13s-4 12-13 12l-5 5v-6C4 22 1 19 1 13 1 4 5 0 15 0z" fill="#fff" />
        <path d="M15 2c9 0 12 3 12 11 0 7-4 10-12 10l-3 3v-4c-6-1-9-4-9-9C3 5 6 2 15 2z" fill="#7360f2" />
        <path d="M10 7c-3 2 1 7 4 9 3 3 6 4 7 1l-3-3-2 1-4-5 1-1z" fill="#fff" />
        <path d="M16 6q6 1 6 6M16 9q3 0 3 3" fill="none" stroke="#fff" />
      </>
    ),
  },
  {
    label: 'Firefox',
    icon: (
      <>
        <path d="M18 1c2 4 10 6 10 15 0 8-6 13-13 13S1 24 1 16c0-5 3-9 5-11v3c3-2 6-1 7-1 0-2 3-4 5-6z" fill="#ff7020" />
        <path d="M19 2c1 3 9 7 9 13-2-4-5-5-8-5-2-2-2-6-1-8z" fill="#ffd030" />
        <path d="M4 18c2 7 8 9 12 9 6 0 9-4 10-8-3 4-8 5-12 3z" fill="#f02860" />
        <circle cx="15" cy="16" r="6" fill="#7838c8" />
        <path d="M7 10c3-1 6 0 8 2-2 1-4 1-5 3z" fill="#ff9820" />
      </>
    ),
  },
  {
    label: 'Total Commander',
    icon: (
      <>
        <path d="M1 1h26l2 2v26H1z" fill="#2038c8" />
        <path d="M9 1h13v9H9z" fill="#c0c4d0" />
        <path d="M17 2h3v7h-3z" fill="#2038c8" />
        <path d="M5 13h20v15H5z" fill="#fff" />
        <path d="M6 15.500h18M6 18.500h18M6 21.500h8" stroke="#f09090" />
        <text x="15" y="27" fontSize="7" fontWeight="bold" fill="#222">64</text>
      </>
    ),
  },
];

const Taskbar = () => (
  <footer className="flex h-[50px] shrink-0 items-stretch bg-linear-to-r from-[#213b45] via-[#1f3642] to-[#1a2440] font-['Open_Sans','Noto_Sans',sans-serif] text-white">
    <button aria-label="Пуск" className="flex w-[60px] items-center justify-center">
      <svg viewBox="0 0 20 20" className="size-5" fill="#fff">
        <path d="M0 3l8-1v7.500H0zM9.500 1.800L20 0v9.500H9.500zM0 10.800h8V18l-8-1zM9.500 10.800H20V20L9.500 18.400z" />
      </svg>
    </button>
    <label className="flex w-[430px] items-center border border-[#c0c0c0] bg-[#f2f2f2] pl-3 text-[#333]">
      <Search className="size-[22px] -scale-x-100 text-black" strokeWidth={1.5} />
      <input placeholder="Введите здесь текст для поиска" aria-label="Поиск" className="ml-[15px] min-w-0 flex-1 text-[18px] placeholder:text-[#333]" />
    </label>
    {taskIcons.map((t) => (
      <button key={t.label} aria-label={t.label} className="flex w-[62px] items-center justify-center">
        <svg viewBox="0 0 30 30" className="size-[29px]">{t.icon}</svg>
      </button>
    ))}
    <button aria-label="Stag" className="flex w-[61px] items-center justify-center border-b-[3px] border-[#76b9ed] bg-[#4b5e68]">
      <StagLogo className="size-[30px]" />
    </button>
    <div className="ml-auto flex items-center text-[17px]">
      <svg viewBox="0 0 30 24" className="h-6 w-[30px]" fill="none" stroke="#fff" strokeWidth="2">
        <path d="M1 1h25v19q0 3 2 3H4q-3 0-3-3zM26 5h3v15q0 2-2 3M1 5h25" />
        <path d="M5 10h7v8H5zM15 10h8M15 14h8M15 18h8" />
      </svg>
      <span className="ml-2.5">19°C</span>
      <span className="ml-2.5">В осн. облачно</span>
      <ChevronUp className="ml-4 size-[22px]" strokeWidth={1.5} />
      <svg viewBox="0 0 20 18" className="ml-2 h-[18px] w-5" fill="none" stroke="#fff" strokeWidth="1.3">
        <path d="M1 6h3l5-4v14l-5-4H1zM11 6q2 3 0 6M14 4q3 5 0 10" />
        <path d="M17 2q4 7 0 14" stroke="#8090a0" />
      </svg>
      <svg viewBox="0 0 20 14" className="ml-2.5 h-3.5 w-5" fill="none" stroke="#fff">
        <path d="M1 1h16v12H1zM18 4.500h1v5h-1" strokeWidth="1.3" />
        <path d="M3 3h9v8H3z" fill="#fff" />
      </svg>
      <svg viewBox="0 0 22 24" className="ml-2.5 h-6 w-[22px]" fill="none" stroke="#fff" strokeWidth="1.3">
        <circle cx="10" cy="12" r="9" />
        <ellipse cx="10" cy="12" rx="4.5" ry="9" />
        <path d="M1 12h18M2.500 7.500h15M2.500 16.500h15M10 3v18" />
        <circle cx="17" cy="19" r="4" fill="#1c2c42" />
        <path d="M14.500 16.500l5 5" />
      </svg>
      <svg viewBox="0 0 20 16" className="ml-2 h-4 w-5">
        <path d="M5 16q-5-1-5-5 0-4 4-4Q5 0 11 0q5 0 6 6 3 1 3 5t-4 5z" fill="#fff" />
        <path d="M10 13V6m-3 3l3-3 3 3" fill="none" stroke="#1c2c42" strokeWidth="2" />
      </svg>
      <span className="ml-3.5 w-8 text-[14px]">ENG</span>
      <time className="ml-2 w-[80px] text-center text-[14px] leading-[23px]">
        16:13
        <br />
        04.08.2021
      </time>
      <button aria-label="Уведомления" className="ml-4 mr-4 flex w-[24px] items-center justify-center">
        <svg viewBox="0 0 22 24" className="h-6 w-[22px]" fill="none" stroke="#fff" strokeWidth="1.3">
          <path d="M1 1h20v17h-7l-3 4-3-4H1z" />
        </svg>
      </button>
      <span className="mr-[5px] h-full w-2 border-r border-[#5a6880]" />
    </div>
  </footer>
);

const App = () => (
  <div className="flex min-h-screen flex-col overflow-hidden bg-[#f0f0f0] font-['Noto_Sans','DejaVu_Sans',sans-serif] text-black">
    <TitleBar />
    <main className="relative flex flex-1">
      <Telemetry />
      <div className="flex min-w-0 flex-1 flex-col">
        <div className="flex">
          <div className="relative min-w-0 flex-1">
            <MultiplierChart />
            <output className="absolute bottom-0.5 left-[3px] whitespace-pre bg-white px-0.5 font-['Liberation_Sans',sans-serif] text-[14px] leading-[17px] text-[#333]">
              {'X: 0,00  Y: 1,50'}
            </output>
          </div>
          <ChartTools />
        </div>
        <nav className="flex h-[31px] border-t border-b border-[#a8a8a8] bg-[#ffffae]">
          {tabs.map((t, i) => (
            <button
              key={t.label}
              className={`${t.width} h-full whitespace-nowrap border-r-2 border-[#808080] bg-linear-to-b pb-0.5 text-[16px] ${
                i ? 'from-[#f8f8f8] to-[#808080]' : 'from-[#44ccd8] to-[#08fcfc]'
              }`}
            >
              {t.label}
            </button>
          ))}
        </nav>
        <div className="flex border-t-3 border-white">
          <div className="min-w-0 flex-1">
            <Oscilloscope />
          </div>
          <LogTools />
        </div>
        <div className="flex flex-1 border-t border-b-2 border-[#a0a0a0] bg-[#ffffae]">
          <div className="flex min-w-0 flex-1 gap-1">
            <div className="flex flex-1 flex-col pt-[21px]">
              <div className="flex-1 border border-[#909090] bg-[#ffffcf]" />
            </div>
            <section className="flex w-[771px] flex-col">
              <h3 className="h-[21px] text-center text-[16px] leading-[22px] font-bold text-[#000080]">Зарегистрированные ошибки</h3>
              <div className="flex-1 border border-[#909090] bg-[#ffffcf]" />
            </section>
          </div>
          <div className="flex w-[38px] flex-col items-center gap-0.5 pt-[3px] pr-px">
            <ToolButton label="Удалить ошибки">
              <BigCross id="xr" from="#ff1010" to="#ff0000" stroke="#607080" />
            </ToolButton>
            <ThickCheck label="Ошибки" />
          </div>
        </div>
      </div>
      <SettingsDialog />
    </main>
    <div className="flex h-[49px] shrink-0 items-center border-t border-white bg-[#f0f0f0] text-[19px]">
      <span className="ml-px flex h-[43px] w-[338px] items-center bg-[#008000] pt-0.5 pl-0.5 text-[#f0f0f0]">Статус: Ожидание подачи газа</span>
      <span className="ml-1.5 flex h-full w-[382px] items-center border-r border-[#d8d8d8] pt-0.5">S/N: 1111190130203684</span>
    </div>
    <Taskbar />
  </div>
);

export default App;
